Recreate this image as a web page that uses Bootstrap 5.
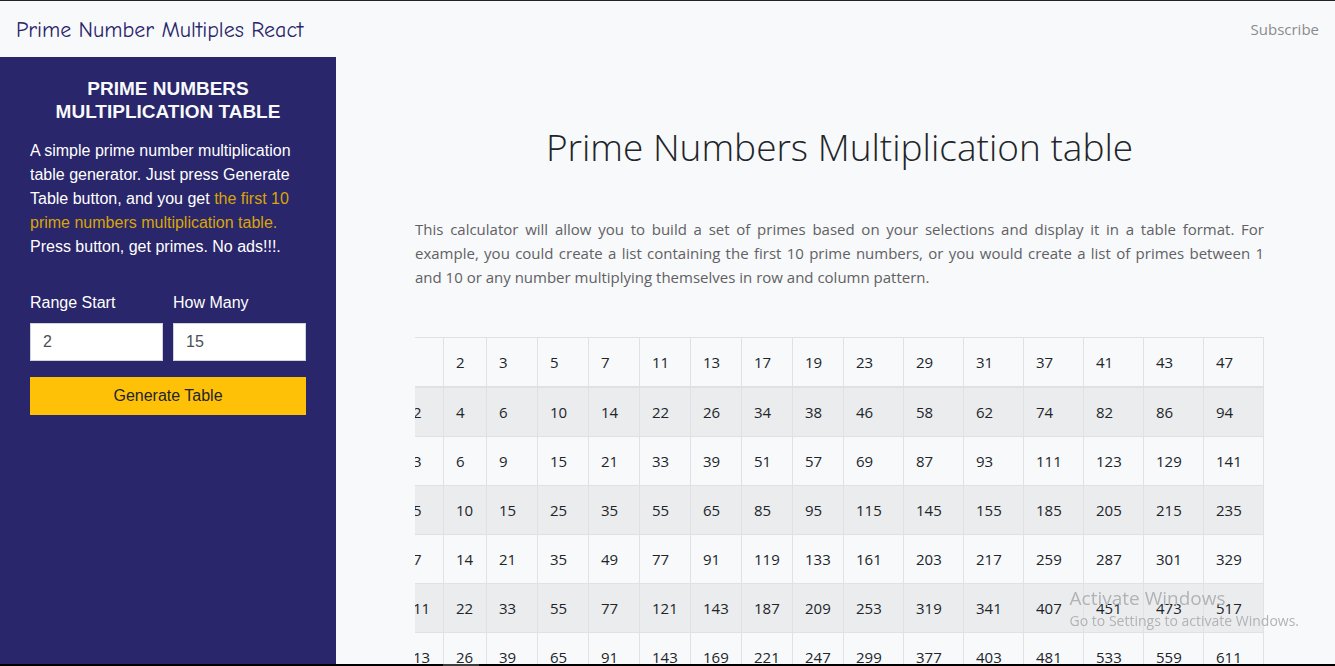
<!DOCTYPE html>
<html lang="en">
<head>
<meta charset="utf-8">
<meta name="viewport" content="width=device-width, initial-scale=1">
<title>Prime Number Multiples React</title>
<link href="https://cdn.jsdelivr.net/npm/bootstrap@5.3.0/dist/css/bootstrap.min.css" rel="stylesheet">
<style>
body { background: #f8f9fb; font-family: "Segoe UI", "Open Sans", sans-serif; font-size: 15px; line-height: 24px; color: #212529; }
.app-shell { border-top: 1px solid #212529; }
.bottom-edge { height: 2px; background: linear-gradient(#3c3c3c, #3c3c3c) 443px 0 / 36px 2px no-repeat #000; }
.top-bar { min-height: 56px; }
.brand-link { font-family: "Comic Sans MS", "Comic Neue", "Noto Sans", sans-serif; font-size: 22px; line-height: 30px; padding-top: 2px; color: #29266b; }
.subscribe-link { color: #8b8c8e; }
.side-panel { width: 336px; background: #29266b; color: #fff; font-family: "Liberation Sans", Arial, sans-serif; font-size: 16px; padding: 20px 30px; }
.side-title { font-size: 19px; line-height: 23px; color: #f8f9fa; }
.highlight-text { color: #d9a406; }
.field-row { gap: 10px; }
.side-panel .form-control { border-color: #ced4da; color: #495057; height: 38px; }
.side-panel .btn-warning { color: #212529; }
.main-panel { padding: 66px 71px 0 79px; scrollbar-width: none; }
.main-title { font-size: 37px; line-height: 48px; font-weight: 300; margin-bottom: 46px; }
.intro-text { color: #5f6163; text-align: justify; margin-bottom: 48px; }
.prime-scroll { scrollbar-width: none; }
.prime-table { table-layout: fixed; width: 864px; --bs-table-bg: transparent; --bs-table-striped-bg: rgba(0, 0, 0, .05); }
.prime-table > :not(caption) > * > * { padding: 12px; border-color: #dee2e6; font-weight: 400; }
.prime-table > thead > tr > th { border-bottom: 2px solid #dee2e6; }
.col-short { width: 43px; }
.col-mid { width: 51px; }
.col-long { width: 60px; }
.os-notice { right: 36px; bottom: 35px; color: #b2b3b5; pointer-events: none; font-size: 14px; line-height: 20px; }
.os-notice-title { font-size: 19px; line-height: 26px; }
</style>
</head>
<body>
<div class="app-shell vh-100 d-flex flex-column overflow-hidden">
  <nav class="top-bar d-flex align-items-center justify-content-between px-3">
    <a class="brand-link text-decoration-none" href="#">Prime Number Multiples React</a>
    <a class="subscribe-link text-decoration-none" href="#">Subscribe</a>
  </nav>
  <div class="d-flex flex-grow-1 overflow-hidden">
    <aside class="side-panel flex-shrink-0">
      <h1 class="side-title fw-bold text-center text-uppercase mb-3">Prime Numbers<br>Multiplication Table</h1>
      <p class="mb-4">A simple prime number multiplication table generator. Just press Generate Table button, and you get <span class="highlight-text">the first 10 prime numbers multiplication table.</span> Press button, get primes. No ads!!!.</p>
      <form class="pt-2">
        <div class="d-flex field-row mb-3">
          <div class="flex-fill"><label class="mb-2" for="rangeStart">Range Start</label><input class="form-control rounded-0" id="rangeStart" type="text" value="2"></div>
          <div class="flex-fill"><label class="mb-2" for="howMany">How Many</label><input class="form-control rounded-0" id="howMany" type="text" value="15"></div>
        </div>
        <button class="btn btn-warning rounded-0 w-100" type="button">Generate Table</button>
      </form>
    </aside>
    <main class="main-panel flex-grow-1 overflow-auto">
      <h2 class="main-title text-center">Prime Numbers Multiplication table</h2>
      <p class="intro-text">This calculator will allow you to build a set of primes based on your selections and display it in a table format. For example, you could create a list containing the first 10 prime numbers, or you would create a list of primes between 1 and 10 or any number multiplying themselves in row and column pattern.</p>
      <div class="table-responsive prime-scroll">
        <table class="table table-bordered table-striped prime-table"></table>
      </div>
    </main>
  </div>
  <div class="bottom-edge flex-shrink-0"></div>
</div>
<div class="os-notice position-fixed"><div class="os-notice-title">Activate Windows</div>Go to Settings to activate Windows.</div>
<script src="https://cdn.jsdelivr.net/npm/bootstrap@5.3.0/dist/js/bootstrap.bundle.min.js"></script>
<script>
const primes = [2, 3, 5, 7, 11, 13, 17, 19, 23, 29, 31, 37, 41, 43, 47];
const largest = primes[primes.length - 1];
const widths = { 2: "col-short", 3: "col-mid", 4: "col-long" };
const cols = primes.map(p => `<col class="${widths[Math.max(2, String(p * largest).length)]}">`).join("");
const head = primes.map(p => `<th scope="col">${p}</th>`).join("");
const rows = primes.map(r => `<tr><th scope="row">${r}</th>${primes.map(c => `<td>${r * c}</td>`).join("")}</tr>`).join("");
document.querySelector(".prime-table").innerHTML =
  `<colgroup><col class="col-short">${cols}</colgroup><thead><tr><th></th>${head}</tr></thead><tbody>${rows}</tbody>`;
const scroller = document.querySelector(".prime-scroll");
scroller.scrollLeft = scroller.scrollWidth;
</script>
</body>
</html>
